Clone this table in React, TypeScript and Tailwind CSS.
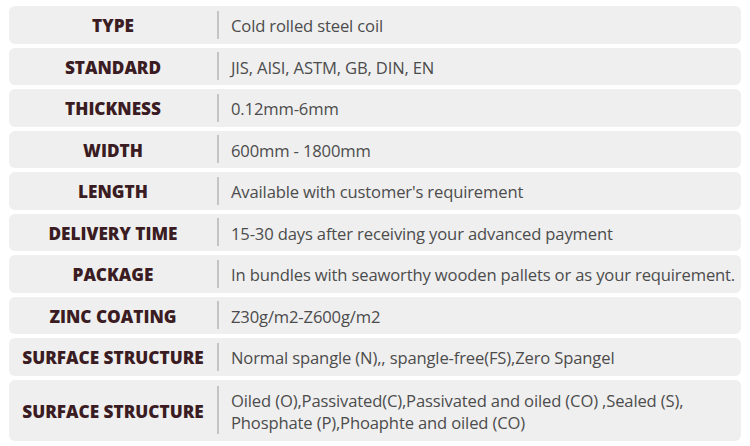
import React from "react";

const specs: { label: string; value: React.ReactNode; tall?: boolean }[] = [
  { label: "TYPE", value: "Cold rolled steel coil" },
  { label: "STANDARD", value: "JIS, AISI, ASTM, GB, DIN, EN" },
  { label: "THICKNESS", value: "0.12mm-6mm" },
  { label: "WIDTH", value: "600mm - 1800mm" },
  { label: "LENGTH", value: "Available with customer's requirement" },
  { label: "DELIVERY TIME", value: "15-30 days after receiving your advanced payment" },
  { label: "PACKAGE", value: "In bundles with seaworthy wooden pallets or as your requirement." },
  { label: "ZINC COATING", value: "Z30g/m2-Z600g/m2" },
  { label: "SURFACE STRUCTURE", value: "Normal spangle (N),, spangle-free(FS),Zero Spangel" },
  {
    label: "SURFACE STRUCTURE",
    value: (
      <>
        Oiled (O),Passivated(C),Passivated and oiled (CO) ,Sealed (S),
        <br />
        Phosphate (P),Phoaphte and oiled (CO)
      </>
    ),
    tall: true,
  },
];

export default function App() {
  return (
    <div
      className="w-[750px] h-[446px] bg-white px-[9px] pt-[6px] flex flex-col gap-[4px] overflow-hidden"
      style={{ fontFamily: '"Open Sans", "Noto Sans", sans-serif' }}
    >
      {specs.map((row, i) => (
        <div
          key={i}
          className={`flex items-center shrink-0 rounded-[6px] bg-[#efefef] ${row.tall ? "h-[61px]" : "h-[37.5px]"}`}
        >
          {/* Label column */}
          <div className="w-[208px] shrink-0 pt-[3px] text-center text-[17.2px] font-extrabold text-[#3a1c22]">
            {row.label}
          </div>

          {/* Divider */}
          <div className={`w-[2px] shrink-0 bg-[#c4c4c4] ${row.tall ? "h-[48px]" : "h-[28px]"}`} />

          {/* Value */}
          <div className="pl-[12px] pt-[3px] text-[16.6px] tracking-[-0.15px] leading-[22px] text-[#4c4c4c] whitespace-nowrap">
            {row.value}
          </div>
        </div>
      ))}
    </div>
  );
}
